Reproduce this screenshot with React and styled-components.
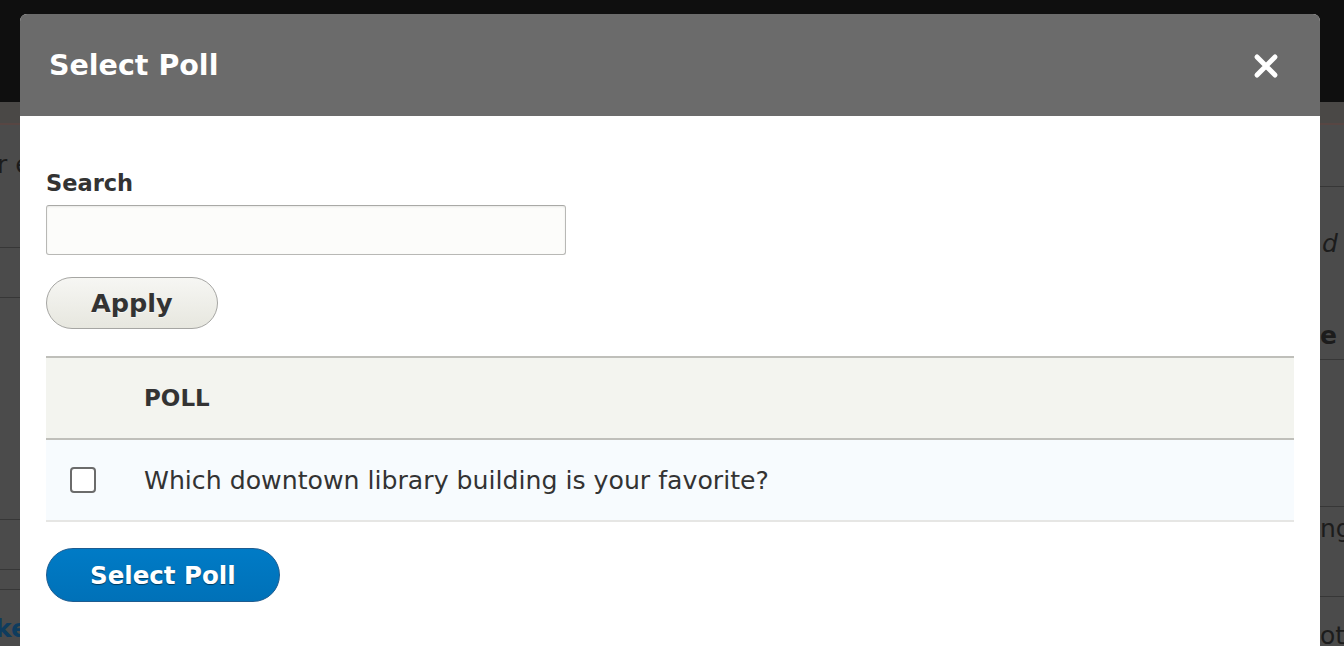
import styled, { createGlobalStyle } from 'styled-components'

const GlobalStyle = createGlobalStyle`
    html, body {
        margin: 0;
        padding: 0;
        height: 100%;
        overflow: hidden;
        background: #4b4b4b;
        font-family: "DejaVu Sans", "Liberation Sans", sans-serif;
    }
`

function CloseIcon() {
    return (
        <svg width='26' height='26' viewBox='0 0 26 26'>
            <path d='M4 4 L22 22 M22 4 L4 22' stroke='#fff' strokeWidth='5' strokeLinecap='round' fill='none' />
        </svg>
    )
}

function App() {
    return (
        <>
            <GlobalStyle />
            <Page>
                <Toolbar />
                <Tabs />
                <Columns>
                    <Main>
                        <Block h={123} pt={28} shift={-3}>r e</Block>
                        <Block h={50} />
                        <Block h={222} />
                        <Block h={50} />
                        <Block h={20} />
                        <Block h={60} pt={27} shift={-5} link>ke</Block>
                    </Main>
                    <Side>
                        <Block h={62} />
                        <Block h={135} pt={45} shift={2} italic noBorder>d your</Block>
                        <Block h={38} pt={2} bold>e</Block>
                        <Block h={147} />
                        <Block h={90} pt={10}>ng</Block>
                        <Block h={60} pt={27} noBorder>ot</Block>
                    </Side>
                </Columns>
            </Page>

            <Dialog>
                <Header>
                    <Title>Select Poll</Title>
                    <CloseButton aria-label='Close'><CloseIcon /></CloseButton>
                </Header>
                <Body>
                    <Label htmlFor='search'>Search</Label>
                    <SearchInput id='search' type='text' />
                    <Button>Apply</Button>
                    <Table>
                        <thead>
                            <tr>
                                <HeadCell />
                                <HeadCell>POLL</HeadCell>
                            </tr>
                        </thead>
                        <tbody>
                            <Row>
                                <CheckCell><Checkbox /></CheckCell>
                                <Cell>Which downtown library building is your favorite?</Cell>
                            </Row>
                        </tbody>
                    </Table>
                    <Button primary>Select Poll</Button>
                </Body>
            </Dialog>
        </>
    )
}

export default App

const Page = styled.div`
    min-height: 646px;
    background: #4b4b4b;
`

const Toolbar = styled.div`
    height: 102px;
    background: #0f0f0f;
`

const Tabs = styled.div`
    height: 21px;
    background: #4a4846;
    border-bottom: 2px solid #574643;
`

const Columns = styled.div`
    display: grid;
    grid-template-columns: 1fr 24px;
`

const Main = styled.div`
    overflow: hidden;
`

const Side = styled.div`
    overflow: hidden;
`

const Block = styled.div`
    box-sizing: border-box;
    height: ${p => p.h}px;
    padding-top: ${p => p.pt || 0}px;
    border-bottom: ${p => p.noBorder ? 'none' : '1px solid #373737'};
    font-size: 25px;
    line-height: 24px;
    color: ${p => p.link ? '#0e3c5e' : '#1c1c1c'};
    font-style: ${p => p.italic ? 'italic' : 'normal'};
    font-weight: ${p => p.bold || p.link ? 700 : 400};
    white-space: nowrap;
    text-indent: ${p => p.shift || 0}px;
`

const Dialog = styled.div`
    position: fixed;
    top: 14px;
    left: 20px;
    width: 1300px;
    bottom: -40px;
    background: #fff;
    border-radius: 7px 7px 0 0;
    overflow: hidden;
`

const Header = styled.div`
    height: 102px;
    box-sizing: border-box;
    padding: 2px 41px 0 29px;
    background: #6b6b6b;
    display: flex;
    align-items: center;
    justify-content: space-between;
`

const Title = styled.h1`
    margin: 0;
    font-size: 28.5px;
    font-weight: 700;
    color: #fff;
    line-height: 1;
`

const CloseButton = styled.button`
    border: 0;
    background: none;
    padding: 0;
    display: flex;
    cursor: pointer;
`

const Body = styled.div`
    padding: 52px 26px;
    display: flex;
    flex-direction: column;
    align-items: flex-start;
`

const Label = styled.label`
    font-size: 22.5px;
    font-weight: 700;
    line-height: 30px;
    color: #333;
    margin-bottom: 7px;
`

const SearchInput = styled.input`
    box-sizing: border-box;
    width: 520px;
    height: 50px;
    margin: 0 0 22px;
    border: 1px solid #b8b8b5;
    border-top-color: #a9a9a6;
    border-radius: 3px;
    background: #fcfcfa;
    box-shadow: inset 0 1px 2px rgba(0, 0, 0, .08);
`

const Button = styled.button`
    box-sizing: border-box;
    height: ${p => p.primary ? 54 : 52}px;
    padding: 0 ${p => p.primary ? 43 : 44}px;
    border-radius: 27px;
    font-family: inherit;
    font-size: ${p => p.primary ? 24.5 : 25.5}px;
    font-weight: 700;
    cursor: pointer;
    border: 1px solid ${p => p.primary ? '#1e5c90' : '#a6a6a3'};
    color: ${p => p.primary ? '#fff' : '#333'};
    background: ${p => p.primary
        ? 'linear-gradient(to bottom, #007bc6, #0071b8)'
        : 'linear-gradient(to bottom, #f6f6f3, #e7e7df)'};
    text-shadow: ${p => p.primary ? '0 1px 1px rgba(0, 0, 0, .5)' : '0 1px hsla(0, 0%, 100%, .6)'};
    margin-bottom: 27px;
`

const Table = styled.table`
    width: 100%;
    border-collapse: collapse;
    border-top: 2px solid #bfbfba;
    margin-bottom: 26px;
`

const HeadCell = styled.th`
    height: 80px;
    padding: 0;
    text-align: left;
    background: #f3f4ef;
    border-bottom: 2px solid #bfbfba;
    font-size: 23px;
    font-weight: 700;
    color: #333;
    &:first-child {
        width: 98px;
    }
`

const Row = styled.tr`
    background: #f7fbfe;
    border-bottom: 2px solid #e6e6e4;
`

const CheckCell = styled.td`
    height: 80px;
    padding: 0 0 0 24px;
`

const Cell = styled.td`
    padding: 0;
    font-size: 25.2px;
    color: #333;
`

const Checkbox = styled.span`
    display: block;
    box-sizing: border-box;
    width: 26px;
    height: 26px;
    border: 2px solid #6b6b6b;
    border-radius: 4px;
    background: #fff;
`
